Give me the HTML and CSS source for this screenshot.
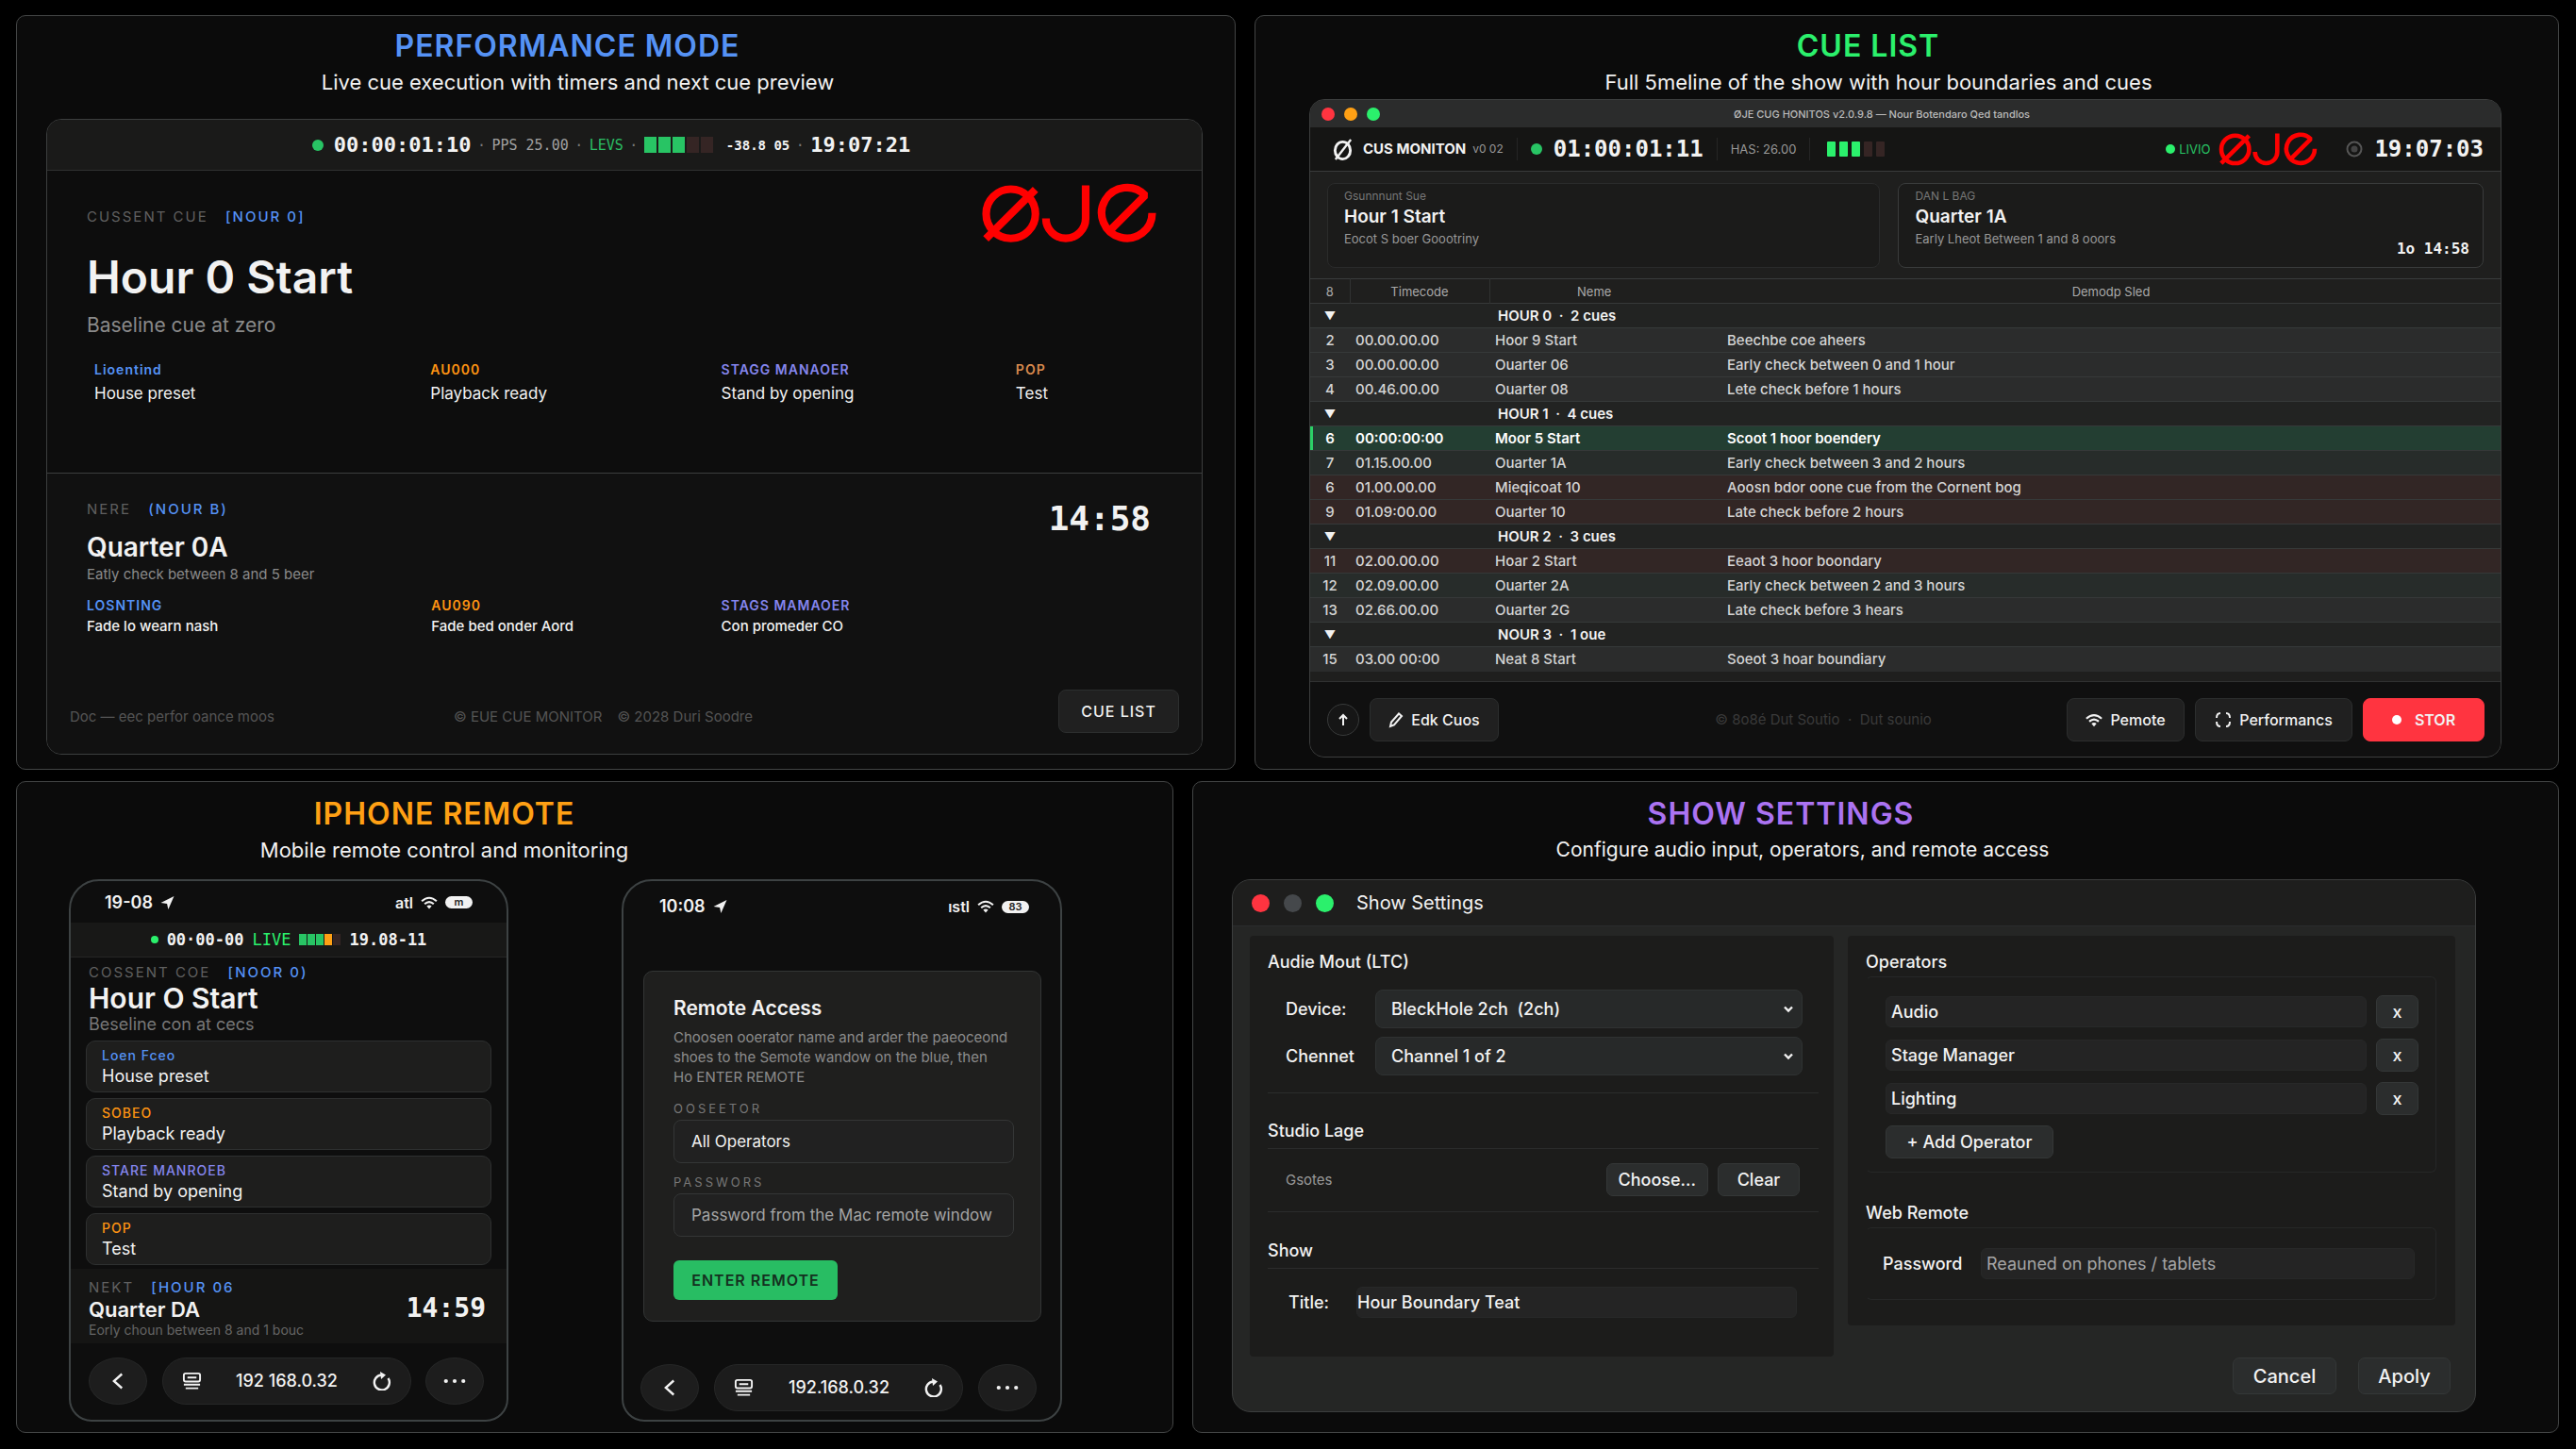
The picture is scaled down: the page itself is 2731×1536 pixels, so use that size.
FILE: index.html
```html
<!DOCTYPE html>
<html lang="en">
<head>
<meta charset="utf-8">
<title>Cue Monitor overview</title>
<link rel="stylesheet" href="styles.css">
</head>
<body>
<svg class="sprite" aria-hidden="true">
  <symbol id="logo" viewBox="110 70 575 196">
    <g fill="none" stroke="currentColor" stroke-width="25">
      <circle cx="208" cy="170" r="80"/>
      <path d="M127 251 288 91"/>
      <path d="M451 78V185A64 64 0 0 1 322 185"/>
      <path d="M667 167A82 82 0 1 1 644 110L532 222" stroke-linejoin="bevel"/>
    </g>
  </symbol>
  <symbol id="wifi" viewBox="0 0 20 16">
    <g fill="none" stroke="currentColor" stroke-width="2.4"><path d="M1 6Q10-2 19 6M4.500 9.500Q10 4.500 15.500 9.500"/></g><path d="M7 12Q10 9.500 13 12L10 15.500Z" fill="currentColor"/>
  </symbol>
  <symbol id="location" viewBox="0 0 16 16"><path d="M0 8 16 0 9 16 7.500 9Z" fill="currentColor"/></symbol>
  <symbol id="back" viewBox="0 0 16 20"><path d="M12 2 3 10 12 18" fill="none" stroke="currentColor" stroke-width="2.500"/></symbol>
  <symbol id="reader" viewBox="0 0 22 20"><g fill="none" stroke="currentColor" stroke-width="2"><rect x="2" y="1.500" width="18" height="9" rx="2"/><path d="M6 6H16M2 14H20M4 18H18"/></g></symbol>
  <symbol id="reload" viewBox="0 0 20 20"><path d="M16.500 7A8 8 0 1 1 9 3.500" fill="none" stroke="currentColor" stroke-width="2.400"/><path d="M8 0 14 3.500 9 8Z" fill="currentColor"/></symbol>
  <symbol id="more" viewBox="0 0 26 6"><g fill="currentColor"><circle cx="3" cy="3" r="2.300"/><circle cx="13" cy="3" r="2.300"/><circle cx="23" cy="3" r="2.300"/></g></symbol>
  <symbol id="chevron" viewBox="0 0 12 8"><path d="M2 1.500 6 5.500 10 1.500" fill="none" stroke="currentColor" stroke-width="2.400"/></symbol>
</svg>

<main class="board">
  <div class="board-row board-row-top">
    <section class="panel panel-performance">
      <header class="panel-head">
        <h2 class="panel-title blue">PERFORMANCE MODE</h2>
        <p class="panel-sub">Live cue execution with timers and next cue preview</p>
      </header>
      <div class="window perf">
        <div class="perf-bar mono">
          <span class="dot"></span>
          <b class="tc">00:00:01:10</b>
          <span class="sep">·</span><span class="muted">PPS 25.00</span>
          <span class="sep">·</span><span class="green">LEVS</span>
          <span class="sep">·</span>
          <span class="meter meter-lg"><i class="on"></i><i class="on"></i><i class="on"></i><i></i><i></i></span>
          <b class="db">-38.8 05</b>
          <span class="sep">·</span><b class="tc">19:07:21</b>
        </div>
        <div class="perf-current">
          <svg class="perf-logo red"><use href="#logo"/></svg>
          <p class="label">CUSSENT CUE <span class="hour">[NOUR 0]</span></p>
          <h1 class="perf-title">Hour 0 Start</h1>
          <p class="perf-desc">Baseline cue at zero</p>
          <dl class="ops ops-current">
            <div><dt class="blue">Lioentind</dt><dd>House preset</dd></div>
            <div><dt class="orange">AU000</dt><dd>Playback ready</dd></div>
            <div><dt class="violet">STAGG MANAOER</dt><dd>Stand by opening</dd></div>
            <div><dt class="rust">POP</dt><dd>Test</dd></div>
          </dl>
        </div>
        <div class="perf-next">
          <div class="perf-next-head">
            <div>
              <p class="label">NERE <span class="hour">(NOUR B)</span></p>
              <h3 class="next-title">Quarter 0A</h3>
              <p class="next-desc">Eatly check between 8 and 5 beer</p>
            </div>
            <b class="mono countdown">14:58</b>
          </div>
          <dl class="ops ops-next">
            <div><dt class="blue">LOSNTING</dt><dd>Fade lo wearn nash</dd></div>
            <div><dt class="orange">AU090</dt><dd>Fade bed onder Aord</dd></div>
            <div><dt class="violet">STAGS MAMAOER</dt><dd>Con promeder CO</dd></div>
          </dl>
          <footer class="perf-foot">
            <span class="foot-mode">Doc — eec perfor oance moos</span>
            <span class="foot-copy"><span>© EUE CUE MONITOR</span><span>© 2028 Duri Soodre</span></span>
            <button class="btn btn-cuelist">CUE LIST</button>
          </footer>
        </div>
      </div>
    </section>

    <section class="panel panel-cues">
      <header class="panel-head">
        <h2 class="panel-title bright-green">CUE LIST</h2>
        <p class="panel-sub">Full 5meline of the show with hour boundaries and cues</p>
      </header>
      <div class="window cues">
        <div class="cues-title">
          <span class="lights"><i class="l-red"></i><i class="l-amber"></i><i class="l-green"></i></span>
          <span class="cues-name">ØJE CUG HONITOS v2.0.9.8 — Nour Botendaro Qed tandlos</span>
        </div>
        <div class="cues-bar">
          <svg class="mark" viewBox="0 0 24 28" aria-hidden="true"><g fill="none" stroke="currentColor"><ellipse cx="12" cy="15" rx="8.500" ry="9.500" stroke-width="3"/><path d="M4 25 21 3" stroke-width="2.500"/></g></svg>
          <b class="brand">CUS MONITON</b><span class="ver">v0 02</span>
          <span class="vrule"></span>
          <span class="dot"></span>
          <b class="mono tc-lg">01:00:01:11</b>
          <span class="vrule"></span>
          <span class="fps">HAS: 26.00</span>
          <span class="vrule"></span>
          <span class="meter meter-md"><i class="on"></i><i class="on"></i><i class="on"></i><i></i><i></i></span>
          <span class="cues-right">
            <span class="dot dot-sm"></span><span class="live-sm">LIVIO</span>
            <svg class="cues-logo red"><use href="#logo"/></svg>
            <svg class="ring" viewBox="0 0 18 18" aria-hidden="true"><circle cx="9" cy="9" r="7.500" fill="none" stroke="#555" stroke-width="2"/><circle cx="9" cy="9" r="3.500" fill="#444"/></svg>
            <b class="mono tc-lg">19:07:03</b>
          </span>
        </div>
        <div class="cards">
          <article class="card">
            <p class="card-label">Gsunnnunt Sue</p>
            <h3 class="card-title">Hour 1 Start</h3>
            <p class="card-desc">Eocot S boer Goootriny</p>
          </article>
          <article class="card card-next">
            <div>
              <p class="card-label">DAN L BAG</p>
              <h3 class="card-title">Quarter 1A</h3>
              <p class="card-desc">Early Lheot Between 1 and 8 ooors</p>
            </div>
            <b class="mono card-time">1o 14:58</b>
          </article>
        </div>
        <table class="cue-table">
          <colgroup><col class="c-num"><col class="c-time"><col class="c-name"><col></colgroup>
          <thead><tr><th>8</th><th>Timecode</th><th>Neme</th><th>Demodp Sled</th></tr></thead>
          <tbody>
            <tr class="group"><td>▼</td><td></td><td>HOUR 0 &nbsp;·&nbsp; 2 cues</td><td></td></tr>
            <tr><td>2</td><td>00.00.00.00</td><td>Hoor 9 Start</td><td>Beechbe coe aheers</td></tr>
            <tr><td>3</td><td>00.00.00.00</td><td>Ouarter 06</td><td>Early check between 0 and 1 hour</td></tr>
            <tr><td>4</td><td>00.46.00.00</td><td>Ouarter 08</td><td>Lete check before 1 hours</td></tr>
            <tr class="group"><td>▼</td><td></td><td>HOUR 1 &nbsp;·&nbsp; 4 cues</td><td></td></tr>
            <tr class="active"><td>6</td><td>00:00:00:00</td><td>Moor 5 Start</td><td>Scoot 1 hoor boendery</td></tr>
            <tr class="greenish"><td>7</td><td>01.15.00.00</td><td>Ouarter 1A</td><td>Early check between 3 and 2 hours</td></tr>
            <tr class="reddish"><td>6</td><td>01.00.00.00</td><td>Mieqicoat 10</td><td>Aoosn bdor oone cue from the Cornent bog</td></tr>
            <tr class="reddish"><td>9</td><td>01.09:00.00</td><td>Ouarter 10</td><td>Late check before 2 hours</td></tr>
            <tr class="group"><td>▼</td><td></td><td>HOUR 2 &nbsp;·&nbsp; 3 cues</td><td></td></tr>
            <tr class="reddish"><td>11</td><td>02.00.00.00</td><td>Hoar 2 Start</td><td>Eeaot 3 hoor boondary</td></tr>
            <tr class="greenish"><td>12</td><td>02.09.00.00</td><td>Ouarter 2A</td><td>Early check between 2 and 3 hours</td></tr>
            <tr><td>13</td><td>02.66.00.00</td><td>Ouarter 2G</td><td>Late check before 3 hears</td></tr>
            <tr class="group"><td>▼</td><td></td><td>NOUR 3 &nbsp;·&nbsp; 1 oue</td><td></td></tr>
            <tr><td>15</td><td>03.00 00:00</td><td>Neat 8 Start</td><td>Soeot 3 hoar boundiary</td></tr>
          </tbody>
        </table>
        <footer class="cues-foot">
          <button class="round" aria-label="Scroll up"><svg width="12" height="14" viewBox="0 0 12 14"><path d="M6 13V2M2 6 6 2 10 6" fill="none" stroke="currentColor" stroke-width="2"/></svg></button>
          <button class="btn btn-edit"><svg width="16" height="18" viewBox="0 0 16 18"><path d="M2 16 3 11.500 11 2.500 14 5 6 14.500Z" fill="none" stroke="currentColor" stroke-width="2"/></svg>Edk Cuos</button>
          <span class="cues-copy">© 8o8é Dut Soutio &nbsp;·&nbsp; Dut sounio</span>
          <button class="btn btn-remote"><svg width="18" height="15"><use href="#wifi"/></svg>Pemote</button>
          <button class="btn btn-perf"><svg width="18" height="18" viewBox="0 0 18 18"><path d="M6 2Q2 2 2 7M12 2Q16 2 16 7M6 16Q2 16 2 11M12 16Q16 16 16 11" fill="none" stroke="currentColor" stroke-width="2"/></svg>Performancs</button>
          <button class="btn btn-stop"><span class="stop-dot"></span>STOR</button>
        </footer>
      </div>
    </section>
  </div>

  <div class="board-row board-row-bottom">
    <section class="panel panel-phone">
      <header class="panel-head">
        <h2 class="panel-title amber">IPHONE REMOTE</h2>
        <p class="panel-sub">Mobile remote control and monitoring</p>
      </header>
      <div class="phones">
        <div class="phone">
          <div class="status">
            <span>19-08</span><svg width="15" height="14"><use href="#location"/></svg>
            <span class="signal">atl</span><svg width="18" height="14"><use href="#wifi"/></svg><span class="battery">m</span>
          </div>
          <div class="phone-bar mono">
            <span class="dot dot-xs"></span><b>00·00-00</b><span class="bright-green">LIVE</span>
            <span class="meter meter-sm"><i class="on"></i><i class="on"></i><i class="on"></i><i class="warn"></i><i></i></span>
            <b>19.08-11</b>
          </div>
          <div class="phone-current">
            <p class="label">COSSENT COE <span class="hour">[NOOR 0)</span></p>
            <h3 class="phone-title">Hour O Start</h3>
            <p class="phone-desc">Beseline con at cecs</p>
          </div>
          <dl class="phone-ops">
            <div><dt class="blue">Loen Fceo</dt><dd>House preset</dd></div>
            <div><dt class="orange">SOBEO</dt><dd>Playback ready</dd></div>
            <div><dt class="violet">STARE MANROEB</dt><dd>Stand by opening</dd></div>
            <div><dt class="orange">POP</dt><dd>Test</dd></div>
          </dl>
          <div class="phone-next">
            <div>
              <p class="label">NEKT <span class="hour">[HOUR 06</span></p>
              <h4 class="phone-next-title">Quarter DA</h4>
              <p class="phone-next-desc">Eorly choun between 8 and 1 bouc</p>
            </div>
            <b class="mono phone-count">14:59</b>
          </div>
          <nav class="browser">
            <button class="oval" aria-label="Back"><svg width="15" height="20"><use href="#back"/></svg></button>
            <div class="address"><svg width="21" height="20"><use href="#reader"/></svg><span>192 168.0.32</span><svg width="20" height="20"><use href="#reload"/></svg></div>
            <button class="oval" aria-label="More"><svg width="24" height="6"><use href="#more"/></svg></button>
          </nav>
        </div>

        <div class="phone phone-login">
          <div class="status">
            <span>10:08</span><svg width="15" height="14"><use href="#location"/></svg>
            <span class="signal">ıstl</span><svg width="18" height="14"><use href="#wifi"/></svg><span class="battery">83</span>
          </div>
          <form class="login">
            <h3 class="login-title">Remote Access</h3>
            <p class="login-text">Choosen ooerator name and arder the paeoceond<br>shoes to the Semote wandow on the blue, then<br>Ho ENTER REMOTE</p>
            <label class="login-label" for="operator">OOSEETOR</label>
            <input class="field" id="operator" type="text" value="All Operators">
            <label class="login-label" for="pass">PASSWORS</label>
            <input class="field" id="pass" type="text" placeholder="Password from the Mac remote window">
            <button class="enter" type="button">ENTER REMOTE</button>
          </form>
          <nav class="browser">
            <button class="oval" aria-label="Back"><svg width="15" height="20"><use href="#back"/></svg></button>
            <div class="address"><svg width="21" height="20"><use href="#reader"/></svg><span>192.168.0.32</span><svg width="20" height="20"><use href="#reload"/></svg></div>
            <button class="oval" aria-label="More"><svg width="24" height="6"><use href="#more"/></svg></button>
          </nav>
        </div>
      </div>
    </section>

    <section class="panel panel-settings">
      <header class="panel-head">
        <h2 class="panel-title purple">SHOW SETTINGS</h2>
        <p class="panel-sub">Configure audio input, operators, and remote access</p>
      </header>
      <div class="window settings">
        <div class="settings-title">
          <span class="lights lights-lg"><i class="l-red"></i><i class="l-grey"></i><i class="l-green"></i></span>
          <span>Show Settings</span>
        </div>
        <form class="settings-body">
          <div class="pane">
            <h4 class="pane-head">Audie Mout (LTC)</h4>
            <div class="select-row">
              <label for="device">Device:</label>
              <span class="select"><select id="device"><option>BleckHole 2ch &nbsp;(2ch)</option></select><svg width="12" height="8"><use href="#chevron"/></svg></span>
            </div>
            <div class="select-row">
              <label for="channel">Chennet</label>
              <span class="select"><select id="channel"><option>Channel 1 of 2</option></select><svg width="12" height="8"><use href="#chevron"/></svg></span>
            </div>
            <h4 class="pane-head pane-head-line">Studio Lage</h4>
            <div class="file-row"><span class="file-name">Gsotes</span><button type="button" class="sbtn">Choose...</button><button type="button" class="sbtn sbtn-clear">Clear</button></div>
            <h4 class="pane-head pane-head-show">Show</h4>
            <div class="title-row"><label for="title">Title:</label><input id="title" class="sfield" type="text" value="Hour Boundary Teat"></div>
          </div>
          <div class="pane pane-right">
            <h4 class="pane-head">Operators</h4>
            <div class="box operators">
              <div class="op-row"><input class="sfield" type="text" aria-label="Operator 1" value="Audio"><button type="button" class="sbtn sbtn-x">x</button></div>
              <div class="op-row"><input class="sfield" type="text" aria-label="Operator 2" value="Stage Manager"><button type="button" class="sbtn sbtn-x">x</button></div>
              <div class="op-row"><input class="sfield" type="text" aria-label="Operator 3" value="Lighting"><button type="button" class="sbtn sbtn-x">x</button></div>
              <button type="button" class="sbtn sbtn-add">+ Add Operator</button>
            </div>
            <h4 class="pane-head pane-head-web">Web Remote</h4>
            <div class="box web"><label for="web-pass">Password</label><input id="web-pass" class="sfield" type="text" placeholder="Reauned on phones / tablets"></div>
          </div>
        </form>
        <footer class="settings-foot"><button class="sbtn sbtn-lg">Cancel</button><button class="sbtn sbtn-lg sbtn-apply">Apoly</button></footer>
      </div>
    </section>
  </div>
</main>
</body>
</html>
```
FILE: styles.css
```css
* { box-sizing: border-box; }
body { margin: 0; background: #000; color: #f2f2f2; font: 400 18px/24px Inter, sans-serif; }
h1, h2, h3, h4, p, dl, dd, dt { margin: 0; }
button, input, select { font: inherit; color: inherit; }
button { cursor: pointer; padding: 0; }
svg { display: block; flex: none; }
.sprite { position: absolute; width: 0; height: 0; }
.mono { font-family: "DejaVu Sans Mono", "Liberation Mono", monospace; }

.blue { color: #5592f5; }
.green { color: #2bbd64; }
.bright-green { color: #2bf06c; }
.amber { color: #ffa014; }
.orange { color: #ff9412; }
.rust { color: #d98a4e; }
.violet { color: #8586ee; }
.purple { color: #ab73f2; }
.red { color: #f00; }
.muted { color: #a0a0a0; }

/* Board */
.board { display: flex; flex-direction: column; gap: 12px; min-height: 100vh; padding: 16px 18px 17px 17px; }
.board-row { display: grid; gap: 20px; }
.board-row-top { flex: 800 0 0px; grid-template-columns: 1293fr 1383fr; }
.board-row-bottom { flex: 691 0 0px; grid-template-columns: 1227fr 1449fr; }
.panel { display: flex; flex-direction: column; min-width: 0; border: 1px solid #434545; border-radius: 10px; background: #0b0b0b; }
.panel-performance { padding: 0 34px 15px 31px; }
.panel-cues { padding: 0 60px 12px 57px; }
.panel-phone { padding: 0 117px 11px 55px; }
.panel-settings { padding: 0 87px 21px 41px; }
.panel-head { padding-top: 12px; text-align: center; }
.panel-performance .panel-head { padding-right: 121px; margin-bottom: 21px; }
.panel-cues .panel-head { padding-right: 79px; }
.panel-phone .panel-head, .panel-settings .panel-head { padding-top: 14px; margin-bottom: 13px; }
.panel-phone .panel-head { padding-right: 257px; }
.panel-settings .panel-head { padding-right: 155px; }
.panel-title { font-size: 32px; line-height: 40px; font-weight: 600; letter-spacing: 1px; }
.panel-sub { font-size: 22px; line-height: 36px; }
.panel-performance .panel-sub, .panel-cues .panel-sub { padding-left: 22px; }
.panel-settings .panel-sub { padding-left: 46px; font-size: 21px; }
.window { flex: 1; display: flex; flex-direction: column; overflow: hidden; border: 1px solid #3c3e3e; border-radius: 16px; }

.dot { flex: none; width: 12px; height: 12px; border-radius: 50%; background: #28c464; }
.dot-sm { width: 10px; height: 10px; background: #2bf06c; }
.dot-xs { width: 8px; height: 8px; background: #2bf06c; }
.meter { display: flex; }
.meter i { background: #352524; }
.meter .on { background: #28c464; }
.meter .warn { background: #ffa014; }
.meter-lg { gap: 2px; }
.meter-lg i { width: 13px; height: 17px; }
.meter-md { gap: 4px; }
.meter-md i { width: 9px; height: 16px; border-radius: 1px; }
.meter-md .on { background: #2bf06c; }
.meter-sm { gap: 1px; }
.meter-sm i { width: 8px; height: 12px; }

.label { font-size: 15px; line-height: 20px; letter-spacing: 2px; color: #606060; }
.hour { margin-left: 12px; font-weight: 500; letter-spacing: 2px; color: #5592f5; }
.btn { display: flex; align-items: center; justify-content: center; gap: 8px; height: 46px; border: 1px solid #2c2e2e; border-radius: 8px; background: #202020; font-size: 16px; font-weight: 500; }

/* Performance window */
.perf { background: #0d0d0d; }
.perf-bar { display: flex; align-items: center; justify-content: center; height: 54px; padding-right: 28px; border-bottom: 1px solid #2f3030; background: #1a1a19; font-size: 15px; }
.perf-bar .tc { margin-left: 11px; font-size: 22px; }
.perf-bar .sep { width: 22px; text-align: center; color: #777; }
.perf-bar .sep + .tc { margin-left: 0; }
.perf-bar .db { margin-left: 14px; font-size: 14px; }
.perf-current { position: relative; flex: 1 0 auto; padding: 39px 42px 56px; }
.perf-logo { position: absolute; top: 13px; right: 46px; width: 189px; height: 64px; }
.perf-title { margin-top: 24px; font-size: 48px; line-height: 60px; font-weight: 600; }
.perf-desc { margin-top: 6px; font-size: 21px; line-height: 30px; color: #8a8a8a; }
.ops { display: grid; font-size: 17px; }
.ops dt { font-size: 14px; line-height: 20px; font-weight: 600; letter-spacing: 1px; }
.ops-current { grid-template-columns: 356fr 308fr 312fr 155fr; margin-top: 22px; padding-left: 8px; }
.ops-current dd { line-height: 30px; }
.ops-next { grid-template-columns: 365fr 307fr 485fr; margin-top: 12px; font-size: 15px; font-weight: 500; }
.perf-next { display: flex; flex-direction: column; padding: 28px 24px 22px 42px; border-top: 1px solid #3c3e3e; background: #111; }
.perf-next-head { display: flex; justify-content: space-between; padding-right: 30px; }
.next-title { margin-top: 12px; font-size: 28px; line-height: 36px; font-weight: 600; }
.next-desc { font-size: 15px; line-height: 22px; color: #8a8a8a; }
.countdown { font-size: 36px; line-height: 40px; }
.perf-foot { display: flex; align-items: center; margin-top: 55px; font-size: 15px; color: #555; }
.foot-mode { flex: 407; margin-left: -18px; }
.foot-copy { flex: 641; display: flex; gap: 16px; }
.foot-mode, .foot-copy { margin-top: 12px; }
.btn-cuelist { width: 128px; color: #f2f2f2; letter-spacing: 1px; }

/* Cue list window */
.cues { background: #1f1f1e; }
.lights { display: flex; gap: 10px; }
.lights i { width: 14px; height: 14px; border-radius: 50%; }
.l-red { background: #ff3440; }
.l-amber { background: #ffa014; }
.l-green { background: #2bf06c; }
.l-grey { background: #45484b; }
.cues-title { display: flex; align-items: center; height: 29px; padding: 0 124px 0 12px; background: #2b2c2c; }
.cues-name { flex: 1; text-align: center; font-size: 11px; font-weight: 500; color: #bbb; }
.cues-bar { display: flex; align-items: center; height: 47px; padding: 0 18px 0 23px; border-bottom: 1px solid #3a3c3c; background: #151514; }
.mark { width: 23px; height: 27px; }
.brand { margin-left: 10px; font-size: 15px; font-weight: 700; }
.ver { margin-left: 7px; font-size: 12px; color: #999; }
.vrule { width: 1px; height: 24px; margin: 0 14px; background: #252525; }
.tc-lg { font-size: 24px; }
.cues-bar > .tc-lg { margin-left: 12px; }
.fps { font-size: 13px; color: #999; }
.fps + .vrule { margin-right: 18px; }
.cues-right { display: flex; align-items: center; margin-left: auto; }
.live-sm { margin: 0 8px 0 4px; font-size: 13px; color: #28c464; }
.cues-logo { width: 107px; height: 36px; }
.ring { width: 18px; height: 18px; margin: 0 12px 0 29px; }
.cards { display: grid; grid-template-columns: 586fr 620fr; gap: 19px; padding: 12px 18px 11px; }
.card { min-height: 90px; padding: 5px 17px; border: 1px solid #2a2b2b; border-radius: 8px; background: #1b1b1a; }
.card-next { display: flex; justify-content: space-between; align-items: flex-end; padding-right: 14px; border-color: #3a3c3c; }
.card-label { font-size: 12px; line-height: 16px; color: #777; }
.card-title { font-size: 19px; line-height: 28px; font-weight: 600; }
.card-desc { font-size: 13px; line-height: 18px; color: #999; }
.card-next > div { align-self: flex-start; }
.card-time { font-size: 16px; line-height: 28px; }
.cue-table { width: 100%; border-collapse: collapse; table-layout: fixed; font-size: 15px; line-height: 20px; font-weight: 500; color: #d4d4d4; }
.c-num { width: 42px; }
.c-time { width: 148px; }
.c-name { width: 246px; }
.cue-table th { height: 26px; padding: 0; border-top: 1px solid #3a3c3c; font-size: 13px; font-weight: 400; color: #aaa; }
.cue-table th:nth-child(-n+2) { border-right: 1px solid #303232; }
.cue-table th:nth-child(3) { padding-right: 24px; }
.cue-table td { height: 26px; padding: 0 6px; border-top: 1px solid #363939; background: #2b2c2c; white-space: nowrap; }
.cue-table td:first-child { text-align: center; }
.cue-table .group td { background: #222322; color: #f2f2f2; font-weight: 600; }
.cue-table .group td:nth-child(3) { padding-left: 9px; }
.cue-table .group td:first-child { font-size: 12px; }
.cue-table .active td { background: #233e32; color: #fff; font-weight: 600; }
.cue-table .active td:first-child { box-shadow: inset 3px 0 #2bd066; }
.cue-table .greenish td { background: #272c2a; }
.cue-table .reddish td { background: #322625; }
.cues-foot { flex: 1 0 auto; display: flex; align-items: center; min-height: 76px; margin-top: 10px; padding: 2px 17px 0 18px; gap: 11px; border-top: 1px solid #303232; background: #101010; }
.round { display: grid; place-items: center; width: 34px; height: 34px; border: 1px solid #383a3a; border-radius: 50%; background: #161616; }
.btn-edit { width: 137px; }
.btn-remote { width: 125px; }
.btn-perf { width: 167px; }
.cues-copy { flex: 1; padding-left: 86px; text-align: center; font-size: 15px; color: #3a3a3a; }
.btn-stop { width: 129px; gap: 14px; border-color: #ff3440; background: #ff3440; font-weight: 600; }
.stop-dot { width: 10px; height: 10px; border-radius: 50%; background: #fff; }

/* Phones */
.phones { flex: 1; display: grid; grid-template-columns: 466fr 467fr; gap: 120px; }
.phone { display: flex; flex-direction: column; overflow: hidden; border: 2px solid #3d4243; border-radius: 32px 32px 24px 24px; background: #0e0e0e; }
.status { display: flex; align-items: center; gap: 8px; height: 44px; padding: 1px 36px 0 36px; font-size: 18px; font-weight: 600; }
.signal { margin-left: auto; font-size: 16px; }
.battery { width: 29px; height: 13px; border-radius: 7px; background: #f2f2f2; color: #222; font-size: 11px; line-height: 13px; text-align: center; }
.phone-bar { display: flex; align-items: center; justify-content: center; gap: 9px; height: 37px; border-bottom: 1px solid #252626; background: #181817; font-size: 17px; }
.phone-current { padding: 6px 19px; }
.phone-title { font-size: 30px; line-height: 34px; font-weight: 600; }
.phone-desc { font-size: 18px; line-height: 22px; color: #777; }
.phone-ops { display: grid; gap: 6px; padding: 0 16px; }
.phone-ops div { padding: 5px 16px 4px; border: 1px solid #2e3030; border-radius: 10px; background: #1e1e1d; }
.phone-ops dt { font-size: 14px; line-height: 20px; font-weight: 500; letter-spacing: 1px; }
.phone-ops dd { line-height: 24px; }
.phone-next { display: flex; justify-content: space-between; align-items: center; margin-top: 4px; padding: 10px 22px 5px 19px; background: #151514; }
.phone-next-title { font-size: 22px; line-height: 26px; font-weight: 600; }
.phone-next-desc { font-size: 14px; line-height: 18px; color: #666; }
.phone-count { font-size: 28px; line-height: 32px; }
.browser { display: flex; justify-content: space-between; margin-top: auto; padding: 0 24px 16px 19px; }
.oval { display: grid; place-items: center; width: 62px; height: 50px; border: 1px solid #262727; border-radius: 50%; background: #1d1d1d; }
.address { display: flex; align-items: center; justify-content: space-between; width: 264px; padding: 0 20px; border: 1px solid #262727; border-radius: 25px; background: #1c1c1c; font-weight: 500; }
.phone-login .status { padding: 4px 33px 0 38px; height: 50px; }
.phone-login .browser { padding: 0 25px 9px 18px; }
.login { display: flex; flex-direction: column; margin: 45px 20px 0 21px; padding: 26px 28px 22px 31px; border: 1px solid #333535; border-radius: 10px; background: #1f1f1e; }
.login-title { font-size: 21px; line-height: 26px; font-weight: 600; }
.login-text { margin-top: 7px; font-size: 15px; line-height: 21px; color: #8c8c8c; white-space: nowrap; }
.login-label { margin-top: 10px; font-size: 13px; line-height: 20px; letter-spacing: 3px; color: #777; }
.login-text + .login-label { margin-top: 13px; }
.field { height: 46px; margin-top: 2px; padding: 0 18px; border: 1px solid #343636; border-radius: 8px; background: #212121; font-size: 17px; }
.field::placeholder { color: #a5a5a5; opacity: 1; }
.enter { align-self: flex-start; width: 174px; height: 42px; margin-top: 25px; border: 0; border-radius: 6px; background: #28bd63; color: #14301f; font-size: 16px; font-weight: 600; letter-spacing: 1px; }

/* Settings window */
.settings { border-radius: 20px; background: #252625; }
.settings-title { display: flex; align-items: center; gap: 24px; height: 49px; padding-left: 20px; border-bottom: 1px solid #2b2c2c; background: #1e1e1d; font-size: 20px; }
.lights-lg { gap: 15px; }
.lights-lg i { width: 19px; height: 19px; }
.settings-body { display: grid; grid-template-columns: 619fr 644fr; gap: 15px; align-items: start; padding: 10px 21px 0 18px; font-size: 18px; font-weight: 500; }
.pane { padding: 15px 16px 41px 19px; border-radius: 4px; background: #1c1c1b; }
.pane-head { font-size: 18px; line-height: 26px; font-weight: 500; }
.select-row { display: flex; align-items: center; margin-top: 9px; padding: 0 17px 0 19px; }
.pane-head + .select-row { margin-top: 16px; }
.select-row label { width: 95px; }
.select { position: relative; flex: 1; }
.select svg { position: absolute; right: 9px; top: 17px; }
.select select { display: block; width: 100%; height: 41px; padding: 0 16px; appearance: none; border: 1px solid #2f3232; border-radius: 8px; background: #272929; }
.pane-head-line { margin-top: 18px; padding: 27px 0 5px; border-top: 1px solid #2b2c2c; border-bottom: 1px solid #2b2c2c; }
.file-row { display: flex; align-items: center; gap: 10px; padding: 15px 20px 16px 19px; border-bottom: 1px solid #2b2c2c; }
.file-name { flex: 1; font-size: 15px; font-weight: 400; color: #999; }
.sbtn { height: 35px; padding: 0 12px; border: 1px solid #343737; border-radius: 7px; background: #2b2d2d; }
.sbtn-clear { width: 87px; }
.pane-head-show { padding: 28px 0 5px; border-bottom: 1px solid #2b2c2c; }
.title-row { display: flex; align-items: center; margin-top: 19px; padding: 0 23px 0 22px; }
.title-row label { width: 72px; }
.sfield { flex: 1; min-width: 0; height: 33px; padding: 0 5px; border: 1px solid #272828; border-radius: 6px; background: #242424; font-weight: 500; }
.sfield::placeholder { color: #a5a5a5; opacity: 1; font-weight: 400; }
.title-row .sfield { padding: 0; }
.pane-right { padding: 15px 20px 27px 19px; }
.box { border: 1px solid #262727; border-left-color: transparent; border-radius: 6px; }
.operators { margin-top: 2px; padding: 19px 18px 14px 20px; }
.op-row { display: flex; align-items: center; gap: 10px; margin-bottom: 11px; }
.sbtn-x { width: 45px; }
.sbtn-add { width: 178px; }
.pane-head-web { margin-top: 30px; }
.web { display: flex; align-items: center; margin-top: 2px; padding: 21px 22px 21px 17px; }
.web label { width: 104px; }
.settings-foot { flex: 1; display: flex; align-items: flex-end; justify-content: flex-end; gap: 23px; padding: 0 26px 18px 0; }
.sbtn-lg { width: 110px; height: 39px; font-size: 20px; font-weight: 500; }
.sbtn-apply { width: 98px; }
```
